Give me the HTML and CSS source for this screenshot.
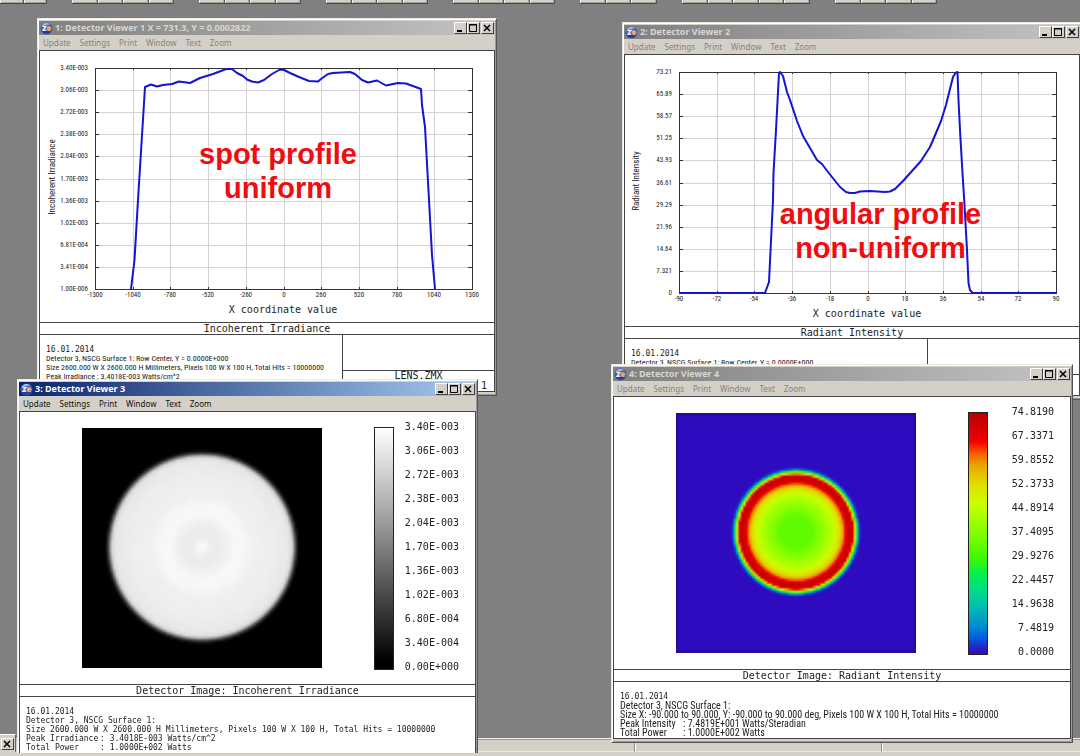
FILE: index.html
```html
<!DOCTYPE html>
<html lang="en">
<head>
<meta charset="utf-8">
<title>Detector Viewers</title>
<link rel="stylesheet" href="styles.css">
</head>
<body>
<svg class="defs" aria-hidden="true">
  <symbol id="app-icon" viewBox="0 0 13 13">
    <circle cx="6.500" cy="6.500" r="6" fill="#3c5cb8"/>
    <path d="M1.500 4.500a5.500 5.500 0 0 1 9-2Q6 2 1.500 4.500z" fill="#a8c0f0"/>
    <path d="M1.200 8.500a6 6 0 0 0 10.500 0Q6 10 1.200 8.500z" fill="#24388c"/>
    <path d="M2.500 4.500h3.500L3 8.300h3.200" fill="none" stroke="#f4e8e4" stroke-width="1.400"/>
    <path d="M7 6.500h3.800C10.800 4.300 7.200 4.300 7.200 6.500S9.500 8.800 10.800 8" fill="#f6c8b0" stroke="#f0a070" stroke-width="1.300"/>
  </symbol>
  <symbol id="minimize" viewBox="0 0 11 10"><path d="M2 8h5" stroke="#000" stroke-width="2"/></symbol>
  <symbol id="maximize" viewBox="0 0 11 10"><path d="M1.500 1.500h7v7h-7zM1 2h8" fill="none" stroke="#000"/></symbol>
  <symbol id="close" viewBox="0 0 11 10"><path d="M2 2l6 6M8 2l-6 6" stroke="#000" stroke-width="1.500"/></symbol>
</svg>
<main class="desktop">
  <div class="toolbar">
    <div class="group g2"><button aria-label="Open"></button><button aria-label="Save"></button></div>
    <div class="group g4"><button aria-label="Tool 1"></button><button aria-label="Tool 2"></button><button aria-label="Tool 3"></button><button aria-label="Tool 4"></button></div>
    <div class="group g4"><button aria-label="Tool 5"></button><button aria-label="Tool 6"></button><button aria-label="Tool 7"></button><button aria-label="Tool 8"></button></div>
    <div class="group g4"><button aria-label="Tool 9"></button><button aria-label="Tool 10"></button><button aria-label="Tool 11"></button><button aria-label="Tool 12"></button></div>
    <div class="group g4"><button aria-label="Tool 13"></button><button aria-label="Tool 14"></button><button aria-label="Tool 15"></button><button aria-label="Tool 16"></button></div>
    <div class="group g3"><button aria-label="Tool 17"></button><button aria-label="Tool 18"></button><button aria-label="Tool 19"></button></div>
    <div class="group g5"><button aria-label="Tool 20"></button><button aria-label="Tool 21"></button><button aria-label="Tool 22"></button><button aria-label="Tool 23"></button><button aria-label="Tool 24"></button></div>
    <div class="group g4"><button aria-label="Tool 25"></button><button aria-label="Tool 26"></button><button aria-label="Tool 27"></button><button aria-label="Tool 28"></button></div>
  </div>

  <footer class="statusbar"><span></span><span></span><span></span></footer>
  <div class="docked"><button class="winbtn" aria-label="Close"><svg><use href="#close"/></svg></button></div>

  <section class="window w1">
    <header class="titlebar"><svg class="icon"><use href="#app-icon"/></svg><h2>1: Detector Viewer 1 X = 731.3, Y = 0.0002822</h2></header>
    <nav class="menu"></nav>
    <div class="client">
      <div class="plot"><svg id="chart1" width="455" height="271" viewBox="40 51 455 271"></svg><p class="note">spot profile<br>uniform</p></div>
      <h3 class="caption">Incoherent Irradiance</h3>
      <div class="info split">
        <div class="report small"><p class="date">16.01.2014</p><p>Detector 3, NSCG Surface 1: Row Center, Y = 0.0000E+000</p><p>Size 2600.000 W X 2600.000 H Millimeters, Pixels 100 W X 100 H, Total Hits = 10000000</p><p>Peak Irradiance : 3.4018E-003 Watts/cm^2</p></div>
        <div class="file"><p>LENS.ZMX</p><p class="page">1</p></div>
      </div>
    </div>
  </section>

  <section class="window w2">
    <header class="titlebar"><svg class="icon"><use href="#app-icon"/></svg><h2>2: Detector Viewer 2</h2></header>
    <nav class="menu"></nav>
    <div class="client">
      <div class="plot"><svg id="chart2" width="455" height="271" viewBox="625 55 455 271"></svg><p class="note low">angular profile<br>non-uniform</p></div>
      <h3 class="caption">Radiant Intensity</h3>
      <div class="info split">
        <div class="report small"><p class="date">16.01.2014</p><p>Detector 3, NSCG Surface 1: Row Center, Y = 0.0000E+000</p></div>
        <div class="file"></div>
      </div>
    </div>
  </section>

  <section class="window w3 active">
    <header class="titlebar"><svg class="icon"><use href="#app-icon"/></svg><h2>3: Detector Viewer 3</h2></header>
    <nav class="menu"></nav>
    <div class="client">
      <div class="image"><canvas id="map3" width="100" height="100"></canvas><div class="bar gray"></div>
        <ol class="scale"><li>3.40E-003</li><li>3.06E-003</li><li>2.72E-003</li><li>2.38E-003</li><li>2.04E-003</li><li>1.70E-003</li><li>1.36E-003</li><li>1.02E-003</li><li>6.80E-004</li><li>3.40E-004</li><li>0.00E+000</li></ol></div>
      <h3 class="caption">Detector Image: Incoherent Irradiance</h3>
      <div class="info"><div class="report large"><p class="date">16.01.2014</p><p>Detector 3, NSCG Surface 1:</p><p>Size 2600.000 W X 2600.000 H Millimeters, Pixels 100 W X 100 H, Total Hits = 10000000</p><p><span>Peak Irradiance</span>: 3.4018E-003 Watts/cm^2</p><p><span>Total Power</span>: 1.0000E+002 Watts</p></div></div>
    </div>
  </section>

  <section class="window w4">
    <header class="titlebar"><svg class="icon"><use href="#app-icon"/></svg><h2>4: Detector Viewer 4</h2></header>
    <nav class="menu"></nav>
    <div class="client">
      <div class="image"><canvas id="map4" width="100" height="100"></canvas><div class="bar rainbow"></div>
        <ol class="scale"><li>74.8190</li><li>67.3371</li><li>59.8552</li><li>52.3733</li><li>44.8914</li><li>37.4095</li><li>29.9276</li><li>22.4457</li><li>14.9638</li><li>7.4819</li><li>0.0000</li></ol></div>
      <h3 class="caption">Detector Image: Radiant Intensity</h3>
      <div class="info"><div class="report medium"><p class="date">16.01.2014</p><p>Detector 3, NSCG Surface 1:</p><p>Size X: -90.000 to 90.000, Y: -90.000 to 90.000 deg, Pixels 100 W X 100 H, Total Hits = 10000000</p><p><span>Peak Intensity</span>: 7.4819E+001 Watts/Steradian</p><p><span>Total Power</span>: 1.0000E+002 Watts</p></div></div>
    </div>
  </section>
</main>
<script src="app.js"></script>
</body>
</html>
```
FILE: styles.css
```css
* { box-sizing: border-box; }
body { margin: 0; overflow: hidden; font-family: "Noto Sans", sans-serif; font-size: 8px; color: #222; }
h2, h3, p, ol { margin: 0; padding: 0; font-weight: normal; }
ol { list-style: none; }
button { font: inherit; color: inherit; padding: 0; border: 0; background: none; }
.defs { position: absolute; width: 0; height: 0; }

.desktop { position: relative; min-height: 100vh; background: #808080; display: flex; flex-direction: column; justify-content: space-between; overflow: hidden; }
.toolbar { display: flex; gap: 25px; height: 4px; }
.group { display: flex; }
.group button { flex: 1; background: #d4d0c8; border-right: 1px solid #555; border-bottom: 1px solid #444; box-shadow: inset 1px 0 #f4f4f0, inset -1px -1px #a8a59e; }
.g2 { width: 47px; }
.g3 { width: 77px; }
.g4 { width: 102px; }
.g5 { width: 128px; }

.statusbar { display: flex; height: 18px; padding-bottom: 4px; background: #d4d0c8; border-top: 1px solid #eee; }
.statusbar span { border-top: 1px solid #999; border-bottom: 1px solid #eceae4; border-right: 1px solid #888; box-shadow: 1px 0 #fff; }
.statusbar span:nth-child(1) { width: 635px; }
.statusbar span:nth-child(2) { width: 247px; }
.statusbar span:nth-child(3) { flex: 1; border-right: 0; }
.docked { position: absolute; left: 0; bottom: 4px; width: 16px; height: 18px; padding: 3px 2px 0 1px; background: #d4d0c8; border-top: 1px solid #fff; border-right: 1px solid #666; }

.window { position: absolute; display: flex; flex-direction: column; padding: 2px 1px 3px; background: #d4d0c8; border: 1px solid #eceae4; border-right-color: #555; border-bottom-color: #555; box-shadow: inset 1px 1px #fff, inset -1px -1px #999; }
.w1 { left: 37px; top: 18px; width: 460px; height: 378px; }
.w2 { left: 622px; top: 22px; width: 460px; height: 378px; }
.w3 { left: 17px; top: 379px; width: 461px; height: 374px; padding-bottom: 0; border-bottom: 0; }
.w4 { left: 611px; top: 364px; width: 462px; height: 379px; }
.titlebar { display: flex; align-items: center; height: 14px; padding: 0 1px; background: linear-gradient(90deg, #808080, #c4c4c4); color: #d8d6d0; }
.active .titlebar { background: linear-gradient(90deg, #0a246a, #a6caf0); color: #fff; }
.titlebar h2 { flex: 1; margin-left: 2px; font-size: 9px; line-height: 14px; font-weight: bold; white-space: nowrap; }
.icon { width: 13px; height: 13px; }
.winbtn { width: 13px; height: 12px; background: #d4d0c8; border: 1px solid #fff; border-right-color: #404040; border-bottom-color: #404040; display: block; }
.winbtn svg { display: block; width: 11px; height: 10px; }
.winbtn.last { margin-left: 1px; }
.menu { display: flex; gap: 9px; height: 15px; padding-left: 4px; color: #85837e; line-height: 14px; }
.active .menu { color: #111; }
.client { flex: 1; min-height: 0; background: #fff; border: 1px solid #444; display: flex; flex-direction: column; overflow: hidden; }
.active .client { border-bottom: 0; }

.plot { position: relative; height: 271px; flex: none; }
.plot svg { display: block; }
.grid { stroke: #d4d2d6; shape-rendering: crispEdges; }
.axis { stroke: #333; fill: none; shape-rendering: crispEdges; }
.curve { stroke: #1414d2; stroke-width: 2; fill: none; stroke-linejoin: round; }
.tick { font: 7px "Roboto Condensed", "DejaVu Sans Condensed", sans-serif; fill: #222; }
.axis-title { font: 10px "DejaVu Sans Mono", monospace; fill: #222; }
.side-title { font: 9px "Roboto Condensed", "DejaVu Sans Condensed", sans-serif; fill: #222; }
.note { position: absolute; left: 22px; right: 0; top: 86px; text-align: center; color: #f00c10; font: bold 29px/34px "Liberation Sans", sans-serif; }
.note.low { left: 57px; top: 142px; }

.caption { flex: none; height: 13px; border-top: 1px solid #444; border-bottom: 1px solid #444; text-align: center; font: 10px/11px "DejaVu Sans Mono", monospace; }
.info { flex: 1; display: flex; min-height: 0; }
.report { flex: 1; min-width: 0; padding: 10px 0 0 6px; font-family: "Roboto Condensed", "DejaVu Sans Condensed", sans-serif; line-height: 9px; white-space: nowrap; }
.report span { display: inline-block; width: 74px; }
.report .date { font: 8px/9px "DejaVu Sans Mono", monospace; }
.report.small { font-size: 8px; }
.report.medium { font-size: 10px; }
.medium span { width: 63px; }
.report.large { font-size: 8px; font-family: "DejaVu Sans Mono", monospace; }
.file { width: 152px; border-left: 1px solid #444; font: 10px/9px "DejaVu Sans Mono", monospace; text-align: center; }
.file::before { content: ""; display: block; height: 35px; border-bottom: 1px solid #444; }
.file .page { text-align: right; padding: 1px 7px 0 0; }

.image { flex: none; height: 272px; display: flex; align-items: flex-start; padding: 15px 16px 0 62px; }
.image canvas { width: 240px; height: 240px; margin-top: 1px; }
.bar { width: 20px; height: 243px; margin-left: 52px; border: 1px solid #222; }
.gray { background: linear-gradient(#fff, #b4b4b4 30%, #555 65%, #000 97%); }
.rainbow { background: linear-gradient(#b80000, #d80000 7%, #f40000 12%, #f86000 17%, #e8a800 22%, #e0e000 30%, #c8ff00 38%, #80ff00 50%, #40f800 60%, #00f050 67%, #00d890 75%, #00b4b8 82%, #0090d0 88%, #0060e0 93%, #3010c0 99%); }
.scale { width: 66px; height: 252px; margin-top: -6px; display: flex; flex-direction: column; justify-content: space-between; text-align: right; font: 10px/12px "DejaVu Sans Mono", monospace; }
```
FILE: app.js
```js
const menuItems = ["Update", "Settings", "Print", "Window", "Text", "Zoom"];
document.querySelectorAll(".menu").forEach(menu => {
  menu.innerHTML = menuItems.map(item => `<button>${item}</button>`).join("");
});
document.querySelectorAll(".titlebar").forEach(bar => {
  bar.insertAdjacentHTML("beforeend", ["minimize", "maximize", "close"].map(name =>
    `<button class="winbtn${name === "close" ? " last" : ""}" aria-label="${name}"><svg><use href="#${name}"/></svg></button>`).join(""));
});

function drawChart(id, left, top, yLabels, xLabels, side, points) {
  const width = 377, height = 221, right = left + width, bottom = top + height;
  let out = "";
  for (let i = 0; i <= 10; i++) {
    const x = Math.round(left + i * width / 10), y = Math.round(top + i * height / 10);
    if (i > 0 && i < 10) {
      out += `<path class="grid" d="M${x} ${top}V${bottom}M${left} ${y}H${right}"/>`;
      out += `<path class="axis" d="M${x} ${top}v2M${x} ${bottom}v-2M${left} ${y}h4M${right} ${y}h-4"/>`;
    }
    out += `<text class="tick" x="${left - 7}" y="${y + 2}" text-anchor="end">${yLabels[i]}</text>`;
    out += `<text class="tick" x="${x}" y="${bottom + 8}" text-anchor="middle">${xLabels[i]}</text>`;
  }
  out += `<rect class="axis" x="${left}" y="${top}" width="${width}" height="${height}"/>`;
  out += `<text class="axis-title" x="${left + 188}" y="${bottom + 24}" text-anchor="middle">X coordinate value</text>`;
  out += `<text class="side-title" transform="translate(${left - 40} ${top + 109}) rotate(-90)" text-anchor="middle">${side}</text>`;
  out += `<polyline class="curve" points="${points}"/>`;
  document.getElementById(id).innerHTML = out;
}

drawChart("chart1", 95, 68,
  ["3.40E-003", "3.06E-003", "2.72E-003", "2.38E-003", "2.04E-003", "1.70E-003", "1.36E-003", "1.02E-003", "6.81E-004", "3.41E-004", "1.00E-006"],
  [-1300, -1040, -780, -520, -260, 0, 260, 520, 780, 1040, 1300], "Incoherent Irradiance",
  "131,289 134.500,260 138,200 145,87 151,84.500 157,86.500 163,85 172,84 179,81.500 190,83 200,78 213,74 221,71 226,69 232,69 237,73 243,76 247,79.500 252,81.500 258,82.500 264,80 272,74 280,69.500 284,70 290,73 299,77 309,81 318,81.500 321,79 328,74 333,73 350,72 355,74 362,80 368,82.500 377,80.500 386,85.500 398,83 406,83.500 421,89 422,105 425,127 429,200 432,255 435,289");
drawChart("chart2", 679, 72,
  ["73.21", "65.89", "58.57", "51.25", "43.93", "36.61", "29.29", "21.96", "14.64", "7.321", "0"],
  [-90, -72, -54, -36, -18, 0, 18, 36, 54, 72, 90], "Radiant Intensity",
  "679,293 765,293 769,282 773,200 773.500,173 776,130 779,73 780,72 783,76 787,92 790,100 793,109 797,121 803,136 810,148 817,160 822,164 828,172 832,177 840,187 846,192 850,193 855,193 860,191.500 870,191 885,192 890,191.500 895,189 903,181 912,171 921,161 930,147 936,133 941,121 946,105 953,77 955.500,73 957.500,72 958.500,100 960,130 962,165 964.500,205 967,250 968.500,283 970,290 972.500,293 1057,293");

function interpolate(stops, t) {
  let i = 1;
  while (i < stops.length - 1 && t > stops[i][0]) i++;
  const [a, ...from] = stops[i - 1], [b, ...to] = stops[i];
  const k = Math.min(1, Math.max(0, (t - a) / (b - a)));
  return from.map((v, n) => v + (to[n] - v) * k);
}

function drawMap(id, cx, cy, colorAt) {
  const context = document.getElementById(id).getContext("2d");
  const image = context.createImageData(100, 100);
  for (let y = 0; y < 100; y++) for (let x = 0; x < 100; x++) {
    const radius = Math.hypot(x + 0.5 - cx, y + 0.5 - cy) * 2.4;
    image.data.set([...colorAt(radius, x, y), 255], (y * 100 + x) * 4);
  }
  context.putImageData(image, 0, 0);
}

const grayProfile = [[0, 250], [4, 247], [9, 238], [18, 236], [25, 241], [33, 248], [42, 247], [52, 240], [70, 238], [86, 232], [90, 215], [92, 140], [94, 50], [97, 0]];
drawMap("map3", 50, 49.6, (r, x, y) => {
  const grain = r < 88 ? Math.sin(x * 0.7 + Math.sin(y * 0.5) * 2) * Math.sin(y * 0.6 + x * 0.2) : 0;
  const v = interpolate(grayProfile, r)[0] + grain;
  return [v, v, v];
});

const intensity = [[0, 33], [16, 34], [28, 40], [38, 46], [44, 53], [47, 59], [50, 68], [54, 73], [57, 69], [59, 50], [61, 23], [63, 4], [65, 0]];
const palette = [[0, 47, 11, 191], [0.07, 0, 96, 224], [0.12, 0, 144, 208], [0.18, 0, 180, 184], [0.25, 0, 216, 144], [0.33, 0, 240, 80], [0.4, 64, 248, 0], [0.5, 128, 255, 0], [0.62, 200, 255, 0], [0.7, 224, 224, 0], [0.78, 232, 168, 0], [0.83, 248, 96, 0], [0.88, 244, 0, 0], [0.93, 216, 0, 0], [1, 184, 0, 0]];
drawMap("map4", 50, 49.6, (r, x, y) => {
  if (x === 0 || y === 0 || x === 99 || y === 99) return [38, 10, 150];
  return interpolate(palette, interpolate(intensity, r)[0] / 74.8);
});
```
